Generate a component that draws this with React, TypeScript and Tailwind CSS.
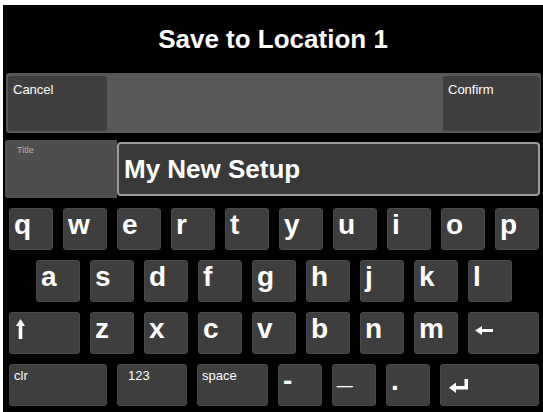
import React from "react";

type Key = { label: React.ReactNode; w?: string; small?: boolean; pl?: string };

const ShiftIcon = () => (
  <svg width="9" height="20" viewBox="0 0 9 20" className="mt-[4px] ml-[2px]">
    <path d="M4.5 0 L9 7 L6.3 7 L6.3 20 L2.7 20 L2.7 7 L0 7 Z" fill="white" />
  </svg>
);

const BackIcon = () => (
  <svg width="18" height="9" viewBox="0 0 18 9" className="mt-[11px] ml-[2px]">
    <path d="M0 4.5 L7 0 L7 3 L18 3 L18 6 L7 6 L7 9 Z" fill="white" />
  </svg>
);

const EnterIcon = () => (
  <svg width="19" height="14" viewBox="0 0 19 14" className="mt-[12px] ml-[4px]">
    <path d="M15.5 0 L19 0 L19 10.5 L7 10.5 L7 14 L0 8.8 L7 3.5 L7 7 L15.5 7 Z" fill="white" />
  </svg>
);

const rows: Key[][] = [
  "qwertyuiop".split("").map((c) => ({ label: c })),
  "asdfghjkl".split("").map((c) => ({ label: c })),
  [
    { label: <ShiftIcon />, w: "w-[71px]" },
    ...("zxcvbnm".split("").map((c) => ({ label: c })) as Key[]),
    { label: <BackIcon />, w: "w-[71px]" },
  ],
  [
    { label: "clr", w: "w-[98px]", small: true },
    { label: "123", w: "w-[70px]", small: true, pl: "pl-[10px]" },
    { label: "space", w: "w-[71px]", small: true },
    { label: "-" },
    { label: <span className="inline-block -translate-y-[6px]">_</span> },
    { label: "." },
    { label: <EnterIcon />, w: "w-[99px]" },
  ],
];

function KeyCap({ k }: { k: Key }) {
  return (
    <div
      className={`${k.w ?? "w-[44px]"} h-full shrink-0 rounded-[3px] border border-[#494949] bg-[#3e3e3e] text-white ${
        k.small
          ? `text-[13px] leading-[16px] pt-[3px] ${k.pl ?? "pl-[4px]"}`
          : "text-[28px] font-bold leading-[28px] pt-[2px] pl-[4px]"
      }`}
    >
      {k.label}
    </div>
  );
}

export default function App() {
  return (
    <div
      className="w-[543px] h-[412px] bg-white pt-[5px] pl-[3px] overflow-hidden"
      style={{ fontFamily: '"Liberation Sans", Arial, sans-serif' }}
    >
      <div className="w-[540px] h-[407px] bg-black flex flex-col">
        {/* Header */}
        <div className="h-[68px] flex items-center justify-center text-white text-[26px] font-bold">
          Save to Location 1
        </div>

        {/* Cancel / Confirm bar */}
        <div className="ml-[3px] w-[535px] h-[60px] rounded-[3px] bg-[#585858] flex justify-between pl-[2px] pr-[1px] pt-[3px] pb-[2px]">
          <div className="w-[99px] h-full rounded-[3px] bg-[#3f3f3f] text-white text-[13px] pl-[5px] pt-[4px]">
            Cancel
          </div>
          <div className="w-[97px] h-full rounded-[3px] bg-[#3f3f3f] text-white text-[13px] pl-[5px] pt-[4px]">
            Confirm
          </div>
        </div>

        {/* Title field */}
        <div className="mt-[7px] ml-[2px] h-[58px] flex">
          <div className="w-[112px] h-full rounded-l-[3px] bg-[#4e4e4e] text-[#b5b5b5] text-[9px] pl-[12px] pt-[4px]">
            Title
          </div>
          <div className="w-[423px] my-[2px] rounded-[4px] border-2 border-[#9c9c9c] bg-[#393939] flex items-center pl-[5px] text-white text-[26px] font-bold">
            My New Setup
          </div>
        </div>

        {/* Keyboard */}
        <div className="mt-[10px] ml-[6px] flex flex-col gap-[10px]">
          {rows.map((row, i) => (
            <div key={i} className={`h-[42px] flex gap-[10px] ${i === 1 ? "pl-[27px]" : ""}`}>
              {row.map((k, j) => (
                <KeyCap key={j} k={k} />
              ))}
            </div>
          ))}
        </div>
      </div>
    </div>
  );
}
